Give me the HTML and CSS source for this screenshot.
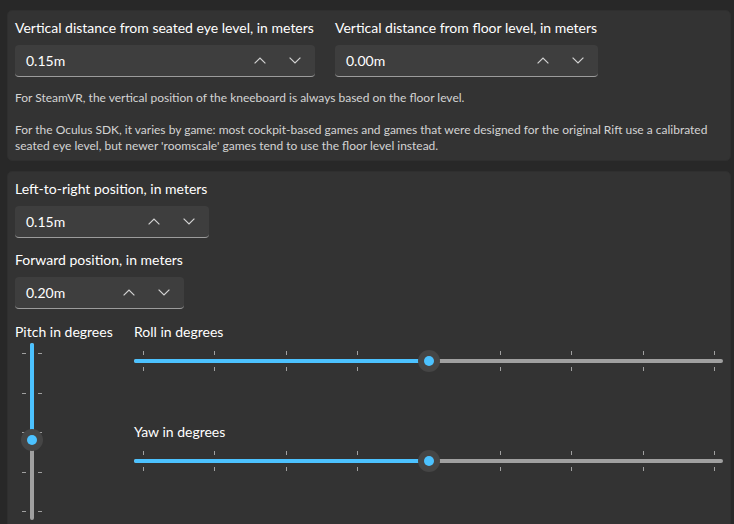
FILE: index.html
```html
<!DOCTYPE html>
<html>
<head>
<meta charset="utf-8">
<link rel="stylesheet" href="styles.css">
</head>
<body>
<div class="page">
  <section class="card card-top">
    <div class="row">
      <div class="field">
        <div class="label">Vertical distance from seated eye level, in meters</div>
        <div class="numbox w-300">
          <span class="value">0.15m</span>
          <span class="spin"><svg viewBox="0 0 12 7" class="chev"><polyline points="0.6,6.4 6,1 11.4,6.4"/></svg></span>
          <span class="spin"><svg viewBox="0 0 12 7" class="chev"><polyline points="0.6,0.6 6,6 11.4,0.6"/></svg></span>
        </div>
      </div>
      <div class="field">
        <div class="label">Vertical distance from floor level, in meters</div>
        <div class="numbox w-263">
          <span class="value">0.00m</span>
          <span class="spin"><svg viewBox="0 0 12 7" class="chev"><polyline points="0.6,6.4 6,1 11.4,6.4"/></svg></span>
          <span class="spin"><svg viewBox="0 0 12 7" class="chev"><polyline points="0.6,0.6 6,6 11.4,0.6"/></svg></span>
        </div>
      </div>
    </div>
    <p class="note first">For SteamVR, the vertical position of the kneeboard is always based on the floor level.</p>
    <p class="note">For the Oculus SDK, it varies by game: most cockpit-based games and games that were designed for the original Rift use a calibrated<br>seated eye level, but newer 'roomscale' games tend to use the floor level instead.</p>
  </section>

  <section class="card card-bottom">
    <div class="field">
      <div class="label">Left-to-right position, in meters</div>
      <div class="numbox w-194">
        <span class="value">0.15m</span>
        <span class="spin"><svg viewBox="0 0 12 7" class="chev"><polyline points="0.6,6.4 6,1 11.4,6.4"/></svg></span>
        <span class="spin"><svg viewBox="0 0 12 7" class="chev"><polyline points="0.6,0.6 6,6 11.4,0.6"/></svg></span>
      </div>
    </div>
    <div class="field second">
      <div class="label">Forward position, in meters</div>
      <div class="numbox w-169">
        <span class="value">0.20m</span>
        <span class="spin"><svg viewBox="0 0 12 7" class="chev"><polyline points="0.6,6.4 6,1 11.4,6.4"/></svg></span>
        <span class="spin"><svg viewBox="0 0 12 7" class="chev"><polyline points="0.6,0.6 6,6 11.4,0.6"/></svg></span>
      </div>
    </div>

    <div class="angles">
      <div class="pitch">
        <div class="label">Pitch in degrees</div>
        <div class="vslider" style="--v:0.55">
          <div class="vtrack"><div class="vfill"></div></div>
          <div class="vticks left"><i></i><i></i><i></i><i></i><i></i></div>
          <div class="vticks right"><i></i><i></i><i></i><i></i><i></i></div>
          <div class="thumb vthumb"></div>
        </div>
      </div>
      <div class="rollyaw">
        <div class="label">Roll in degrees</div>
        <div class="hslider" style="--v:0.5">
          <div class="hticks top"><i></i><i></i><i></i><i></i><i></i><i></i><i></i><i></i><i></i></div>
          <div class="htrack"><div class="hfill"></div></div>
          <div class="hticks bottom"><i></i><i></i><i></i><i></i><i></i><i></i><i></i><i></i><i></i></div>
          <div class="thumb hthumb"></div>
        </div>
        <div class="label yaw">Yaw in degrees</div>
        <div class="hslider" style="--v:0.5">
          <div class="hticks top"><i></i><i></i><i></i><i></i><i></i><i></i><i></i><i></i><i></i></div>
          <div class="htrack"><div class="hfill"></div></div>
          <div class="hticks bottom"><i></i><i></i><i></i><i></i><i></i><i></i><i></i><i></i><i></i></div>
          <div class="thumb hthumb"></div>
        </div>
      </div>
    </div>
  </section>
</div>
</body>
</html>
```

FILE: styles.css
```css
html, body {
  margin: 0;
  padding: 0;
  background: #282828;
  overflow: hidden;
}

body {
  font-family: Lato, "Noto Sans", "Liberation Sans", sans-serif;
  color: #ffffff;
}

.page {
  display: flex;
  flex-direction: column;
  gap: 10px;
  padding: 10px 3px 0 7px;
}

.card {
  background: #333333;
  border: 1px solid #2f2f2f;
  border-radius: 5px;
  padding: 7px 7px 6px 7px;
}

.card-bottom {
  padding-bottom: 20px;
}

.row {
  display: flex;
  gap: 20px;
}

.field {
  display: flex;
  flex-direction: column;
  gap: 7px;
}

.field.second {
  margin-top: 12px;
}

.label {
  font-size: 14px;
  line-height: 20px;
  color: #ffffff;
  white-space: nowrap;
}

.numbox {
  display: flex;
  align-items: center;
  height: 31px;
  background: #3e3e3e;
  border-radius: 4px;
  border-bottom: 1px solid #9c9c9c;
  padding: 0 3px 0 11px;
  box-sizing: content-box;
}

.w-300 { width: 286px; }
.w-263 { width: 249px; }
.w-194 { width: 180px; }
.w-169 { width: 155px; }

.value {
  flex: 1;
  font-size: 14px;
  color: #ffffff;
}

.spin {
  width: 35px;
  display: flex;
  justify-content: center;
  align-items: center;
}

.chev {
  width: 12px;
  height: 7px;
  fill: none;
  stroke: #d2d2d2;
  stroke-width: 1.2;
}

.note {
  margin: 0;
  font-size: 12px;
  line-height: 16px;
  color: #d4d4d4;
}

.note.first {
  margin-top: 13px;
  margin-bottom: 16px;
}

.angles {
  display: grid;
  grid-template-columns: 119px 1fr;
  margin-top: 13px;
}

.rollyaw .label.yaw {
  margin-top: 42px;
}

/* Horizontal slider */
.hslider {
  position: relative;
  height: 38px;
}

.htrack {
  position: absolute;
  left: 0;
  right: 0;
  top: 17px;
  height: 4px;
  border-radius: 2px;
  background: #a0a0a0;
  overflow: hidden;
}

.hfill {
  height: 100%;
  width: calc(9px + (100% - 18px) * var(--v));
  background: #4cc2ff;
}

.hticks {
  position: absolute;
  left: 9px;
  right: 8px;
  height: 4px;
  display: flex;
  justify-content: space-between;
}

.hticks.top { top: 9px; }
.hticks.bottom { top: 25px; }

.hticks i {
  display: block;
  width: 1px;
  height: 4px;
  background: #a0a0a0;
}

.thumb {
  position: absolute;
  width: 22px;
  height: 22px;
  border-radius: 50%;
  background: #454545;
}

.thumb::after {
  content: "";
  position: absolute;
  left: 6px;
  top: 6px;
  width: 10px;
  height: 10px;
  border-radius: 50%;
  background: #4cc2ff;
}

.hthumb {
  top: 8px;
  left: calc(9px + (100% - 18px) * var(--v) - 11px);
}

/* Vertical slider */
.vslider {
  position: relative;
  width: 34px;
  height: 177px;
  margin-top: 1px;
}

.vtrack {
  position: absolute;
  left: 15px;
  width: 4px;
  top: 0;
  bottom: 0;
  border-radius: 2px;
  background: #a0a0a0;
  overflow: hidden;
}

.vfill {
  width: 100%;
  height: calc(10px + (100% - 18px) * var(--v));
  background: #4cc2ff;
}

.vticks {
  position: absolute;
  top: 10px;
  bottom: 8px;
  width: 4px;
  display: flex;
  flex-direction: column;
  justify-content: space-between;
}

.vticks.left { left: 7px; }
.vticks.right { left: 23px; }

.vticks i {
  display: block;
  width: 4px;
  height: 1px;
  background: #a0a0a0;
}

.vthumb {
  left: 6px;
  top: calc(10px + (100% - 18px) * var(--v) - 11px);
}
```
